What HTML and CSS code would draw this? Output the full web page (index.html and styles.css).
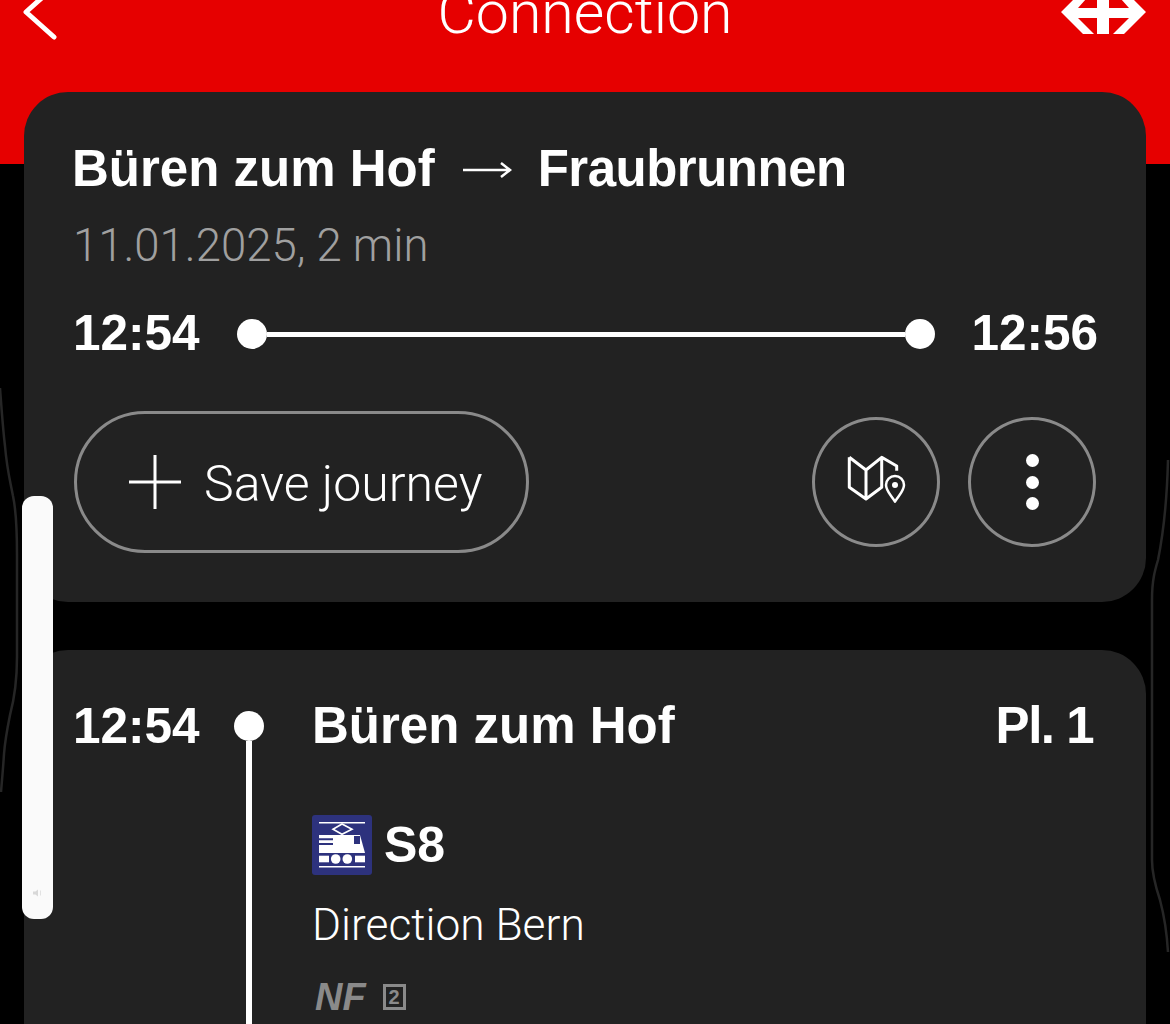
FILE: index.html
```html
<!DOCTYPE html>
<html lang="en">
<head>
  <meta charset="UTF-8">
  <meta name="viewport" content="width=device-width, initial-scale=1.0">
  <title>Connection</title>
  <link rel="stylesheet" href="styles.css">
</head>
<body>
  <header class="topbar">
    <div class="topbar-row">
      <svg class="back" width="40" height="60" viewBox="0 0 40 60">
        <path d="M23 7 L4 24 L32 49" fill="none" stroke="#fff" stroke-width="5" stroke-linecap="round" stroke-linejoin="round"/>
      </svg>
      <h1 class="page-title">Connection</h1>
      <svg class="logo" width="85" height="44" viewBox="0 0 85 44">
        <path fill="#fff" d="M0 22 L22 0 H33 L17 18 H36 V0 H48 V18 H68 L52 0 H63 L85 22 L63 44 H52 L68 28 H48 V44 H36 V28 H17 L33 44 H22 Z"/>
      </svg>
    </div>
  </header>

  <main class="content">
    <section class="card summary">
      <div class="route">
        <span>Büren zum Hof</span>
        <svg class="route-arrow" width="50" height="24" viewBox="0 0 50 24">
          <path d="M1 12 H48 M39 5 L48 12 L39 19" fill="none" stroke="#fff" stroke-width="2.5"/>
        </svg>
        <span class="route-end">Fraubrunnen</span>
      </div>
      <div class="date">11.01.2025, 2 min</div>
      <div class="times">
        <span class="time">12:54</span>
        <div class="bar">
          <span class="dot"></span>
          <span class="bar-line"></span>
          <span class="dot"></span>
        </div>
        <span class="time time-end">12:56</span>
      </div>
      <div class="actions">
        <button class="save-btn" type="button">
          <svg width="52" height="54" viewBox="0 0 52 54">
            <path d="M0 27 H52 M26 0 V54" stroke="#fff" stroke-width="3" fill="none"/>
          </svg>
          <span class="save-label">Save journey</span>
        </button>
        <div class="round-btns">
          <button class="round-btn" type="button">
            <svg class="map-icon" width="60" height="50" viewBox="0 0 60 50">
              <path d="M2.3 2.3 L19 15 L34.7 2.3 L49.7 11 V15.7 M2.3 2.3 V32.3 L19 44 L34.7 32.3 V2.3 M19 15 V44" fill="none" stroke="#fff" stroke-width="3" stroke-linejoin="round"/>
              <path d="M48 46.7 C44 40 39 36 39 30 A9 9 0 0 1 57 30 C57 36 52 40 48 46.7 Z" fill="#222" stroke="#fff" stroke-width="2.5" stroke-linejoin="round"/>
              <circle cx="48" cy="30" r="3" fill="#fff"/>
            </svg>
          </button>
          <button class="round-btn more-btn" type="button">
            <span class="more-dot"></span>
            <span class="more-dot"></span>
            <span class="more-dot"></span>
          </button>
        </div>
      </div>
    </section>

    <section class="card leg">
      <span class="time leg-time">12:54</span>
      <div class="track">
        <span class="track-box"><span class="dot"></span></span>
        <span class="track-line"></span>
      </div>
      <div class="leg-body">
        <div class="stop">
          <span>Büren zum Hof</span>
          <span class="platform">Pl. 1</span>
        </div>
        <div class="line">
          <svg class="train" width="60" height="60" viewBox="0 0 60 60">
            <rect width="60" height="60" rx="3" fill="#2d327d"/>
            <path d="M7 7.7 H53 M7 51.7 H53" stroke="#fff" stroke-width="1.6"/>
            <path d="M30 9 L21 14.3 L30 19.3 L40 14.3 Z" fill="none" stroke="#fff" stroke-width="1.6"/>
            <path d="M7 20 H48 L53 38 H7 Z" fill="#fff"/>
            <path d="M7 24.3 H21 M7 29 H21" stroke="#2d327d" stroke-width="2"/>
            <rect x="42" y="21" width="6" height="8" fill="#2d327d"/>
            <rect x="7" y="40.7" width="10" height="6.6" fill="#fff"/>
            <rect x="43" y="40.7" width="10" height="6.6" fill="#fff"/>
            <circle cx="23.7" cy="44" r="4.8" fill="#fff"/>
            <circle cx="35.3" cy="44" r="4.8" fill="#fff"/>
          </svg>
          <span>S8</span>
        </div>
        <div class="direction">Direction Bern</div>
        <div class="attrs">
          <span class="attr-nf">NF</span>
          <span class="attr-class">2</span>
        </div>
      </div>
    </section>
  </main>

  <!-- volume overlay from the phone, sits over the cards -->
  <div class="volume">
    <svg width="10" height="8" viewBox="0 0 10 8">
      <path d="M0 2.5 H2.5 L5 0.5 V7.5 L2.5 5.5 H0 Z" fill="#d8d8d8"/>
      <path d="M7.5 1.5 V6.5" stroke="#e2e2e2" stroke-width="1"/>
    </svg>
  </div>
  <svg class="edge edge-left" width="24" height="420" viewBox="0 0 24 420">
    <path d="M0 8 C2 35 3 50 5 66 C7 90 10 100 13 116 C16 130 17 150 17 175 V277 C17 300 14 320 10 335 C7 350 5 360 4 374 C3 390 2 400 1 412" fill="none" stroke="#262626" stroke-width="2.5"/>
  </svg>
  <svg class="edge edge-right" width="24" height="510" viewBox="0 0 24 510">
    <path d="M22 10 C21 50 18 80 12 110 C9 120 6 130 6 150 V410 C6 425 10 438 14 450 C18 465 21 485 22 502" fill="none" stroke="#262626" stroke-width="2.5"/>
  </svg>
</body>
</html>
```

FILE: styles.css
```css
* {
  box-sizing: border-box;
}

html, body {
  height: 1024px;
  overflow: hidden;
}

body {
  position: relative;
  margin: 0;
  background-color: #000000;
  color: #ffffff;
  font-family: "Liberation Sans", Arial, sans-serif;
}

button {
  background: none;
  color: inherit;
  font: inherit;
  padding: 0;
  cursor: pointer;
}

.topbar {
  height: 164px;
  background-color: #e60000;
}

.topbar-row {
  display: grid;
  grid-template-columns: 1fr auto 1fr;
  grid-template-rows: 24px;
  align-items: center;
  padding: 0 24px;
}

.back {
  margin-top: 12px;
  margin-left: -2px;
}

.page-title {
  margin: 2px 0 0;
  font-family: Roboto, sans-serif;
  font-size: 59px;
  font-weight: 300;
  line-height: 24px;
}

.logo {
  justify-self: end;
}

.content {
  display: flex;
  flex-direction: column;
  gap: 48px;
  margin-top: -72px;
  padding: 0 24px;
}

.card {
  background-color: #222222;
  border-radius: 44px;
  padding: 48px 50px 49px;
}

.route {
  display: flex;
  align-items: center;
  gap: 27px;
  height: 56px;
  margin-left: -2px;
  font-size: 51px;
  font-weight: bold;
}

.route-arrow {
  margin-top: 4px;
}

.route-end {
  margin-left: -1px;
  letter-spacing: -0.5px;
}

.date {
  margin-top: 25px;
  margin-left: -1px;
  font-family: Roboto, sans-serif;
  font-size: 45.5px;
  font-weight: 300;
  line-height: 50px;
  color: #a0a0a0;
}

.times {
  display: flex;
  align-items: center;
  justify-content: space-between;
  height: 56px;
  margin-top: 35px;
}

.time {
  margin: -2px 0 0 -1px;
  font-size: 49.5px;
  font-weight: bold;
  line-height: 56px;
}

.time-end {
  margin-right: -2px;
}

.leg-time {
  margin-top: 0;
}

.bar {
  display: flex;
  align-items: center;
  width: 698px;
  margin-left: -1px;
}

.bar-line {
  flex: 1;
  height: 5px;
  background-color: #ffffff;
}

.dot {
  display: block;
  width: 30px;
  height: 30px;
  border-radius: 50%;
  background-color: #ffffff;
}

.actions {
  display: flex;
  align-items: center;
  justify-content: space-between;
  margin-top: 49px;
}

.save-btn {
  display: flex;
  align-items: center;
  gap: 23px;
  width: 455px;
  height: 142px;
  padding-left: 52px;
  border: 3px solid #8a8a8a;
  border-radius: 71px;
  font-family: Roboto, sans-serif;
  font-size: 50px;
  font-weight: 300;
}

.save-label {
  margin-top: 3px;
}

.round-btns {
  display: flex;
  gap: 28px;
}

.round-btn {
  display: flex;
  align-items: center;
  justify-content: center;
  width: 128px;
  height: 130px;
  border: 3px solid #8a8a8a;
  border-radius: 50%;
}

.map-icon {
  margin: -4px 0 0 2px;
}

.more-btn {
  flex-direction: column;
  gap: 8.5px;
}

.more-dot {
  width: 13px;
  height: 13px;
  border-radius: 50%;
  background-color: #ffffff;
}

.leg {
  display: grid;
  grid-template-columns: 150px 50px 1fr;
  min-height: 600px;
  padding-bottom: 0;
}

.track {
  display: flex;
  flex-direction: column;
  align-items: center;
}

.track-box {
  display: flex;
  align-items: center;
  height: 56px;
}

.track-line {
  flex: 1;
  width: 6px;
  margin-top: -13px;
  background-color: #ffffff;
}

.leg-body {
  padding-left: 38px;
}

.stop {
  display: flex;
  justify-content: space-between;
  height: 56px;
  font-size: 51px;
  font-weight: bold;
  line-height: 56px;
}

.platform {
  margin-right: 3px;
  letter-spacing: -1.5px;
}

.line {
  display: flex;
  align-items: center;
  gap: 12px;
  margin-top: 61px;
  font-size: 50px;
  font-weight: bold;
}

.direction {
  margin-top: 25px;
  font-family: Roboto, sans-serif;
  font-size: 44.3px;
  font-weight: 300;
  line-height: 50px;
}

.attrs {
  display: flex;
  align-items: center;
  gap: 17px;
  height: 34px;
  margin-top: 30px;
  color: #8a8a8a;
}

.attr-nf {
  margin-left: 3px;
  font-size: 38px;
  font-style: italic;
  font-weight: bold;
}

.attr-class {
  display: flex;
  align-items: center;
  justify-content: center;
  width: 23px;
  height: 26px;
  border: 3px solid #8a8a8a;
  font-size: 20px;
  font-weight: bold;
}

.volume {
  position: absolute;
  left: 22px;
  top: 496px;
  display: flex;
  align-items: flex-end;
  justify-content: center;
  width: 31px;
  height: 423px;
  padding-bottom: 22px;
  border-radius: 12px;
  background-color: #fafafa;
}

.edge {
  position: absolute;
}

.edge-left {
  left: 0;
  top: 380px;
}

.edge-right {
  left: 1146px;
  top: 450px;
}
```
